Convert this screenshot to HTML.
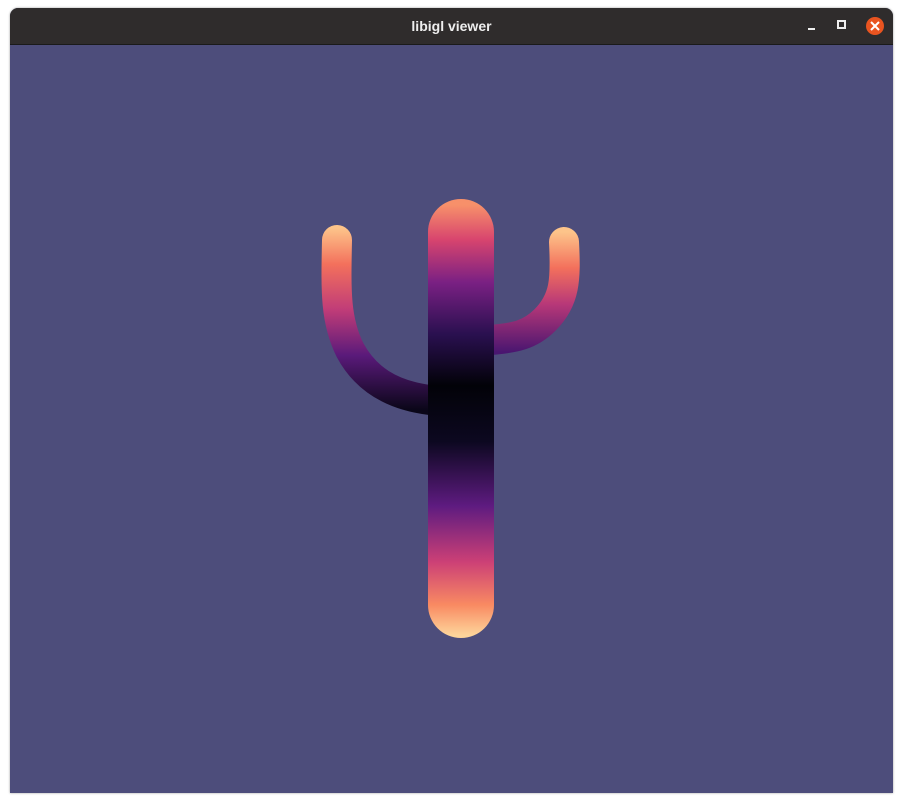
<!DOCTYPE html>
<html><head><style>
body{margin:0;width:903px;height:803px;background:#fff;overflow:hidden;font-family:"Liberation Sans",sans-serif}
.win{position:absolute;left:10px;top:8px;width:883px;height:785px;background:#4d4d7b;border-radius:8px 8px 0 0;overflow:hidden;box-shadow:0 0 2px rgba(0,0,0,.4)}
.tb{height:36px;background:#2f2c2c;border-bottom:1px solid #1a1a1a;color:#eee;font-weight:bold;font-size:14px;text-align:center;line-height:36px}
</style></head><body>
<div class="win"><div class="tb">libigl viewer</div>
<svg style="position:absolute;right:0;top:0" width="110" height="36">
<rect x="25" y="20" width="7" height="2" fill="#eee"/>
<rect x="55" y="13" width="7" height="7" fill="none" stroke="#eee" stroke-width="2"/>
<circle cx="92" cy="18" r="9" fill="#e95420"/>
<path d="M88 14l8 8M96 14l-8 8" stroke="#fff" stroke-width="2"/>
</svg>
</div>
<svg style="position:absolute;left:0;top:0" width="903" height="803">
<defs>
<linearGradient id="t" gradientUnits="userSpaceOnUse" x1="0" y1="205" x2="0" y2="635">
<stop offset="0" stop-color="#f7906a"/><stop offset=".08" stop-color="#d8456e"/><stop offset=".18" stop-color="#7a2083"/><stop offset=".3" stop-color="#2a1050"/><stop offset=".42" stop-color="#020208"/><stop offset=".55" stop-color="#0c0820"/><stop offset=".7" stop-color="#5e1b80"/><stop offset=".83" stop-color="#cc4076"/><stop offset=".93" stop-color="#f98a62"/><stop offset="1" stop-color="#fdd49a"/></linearGradient>
<linearGradient id="l" gradientUnits="userSpaceOnUse" x1="0" y1="228" x2="0" y2="410">
<stop offset="0" stop-color="#fdc48a"/><stop offset=".2" stop-color="#f3705c"/><stop offset=".45" stop-color="#c03c78"/><stop offset=".7" stop-color="#5a1a7a"/><stop offset="1" stop-color="#0a0618"/></linearGradient>
<linearGradient id="r" gradientUnits="userSpaceOnUse" x1="0" y1="232" x2="0" y2="352">
<stop offset="0" stop-color="#fdc48a"/><stop offset=".3" stop-color="#f3705c"/><stop offset=".6" stop-color="#b83878"/><stop offset="1" stop-color="#4a1670"/></linearGradient>
</defs>
<path d="M337 240 C336 290 335 320 350 350 C365 378 390 395 430 400" fill="none" stroke="url(#l)" stroke-width="30" stroke-linecap="round"/>
<path d="M564 242 C566 280 565 300 545 320 C530 335 515 338 490 340" fill="none" stroke="url(#r)" stroke-width="30" stroke-linecap="round"/>
<path d="M461 232 L461 605" fill="none" stroke="url(#t)" stroke-width="66" stroke-linecap="round"/>
</svg>
</body></html>
